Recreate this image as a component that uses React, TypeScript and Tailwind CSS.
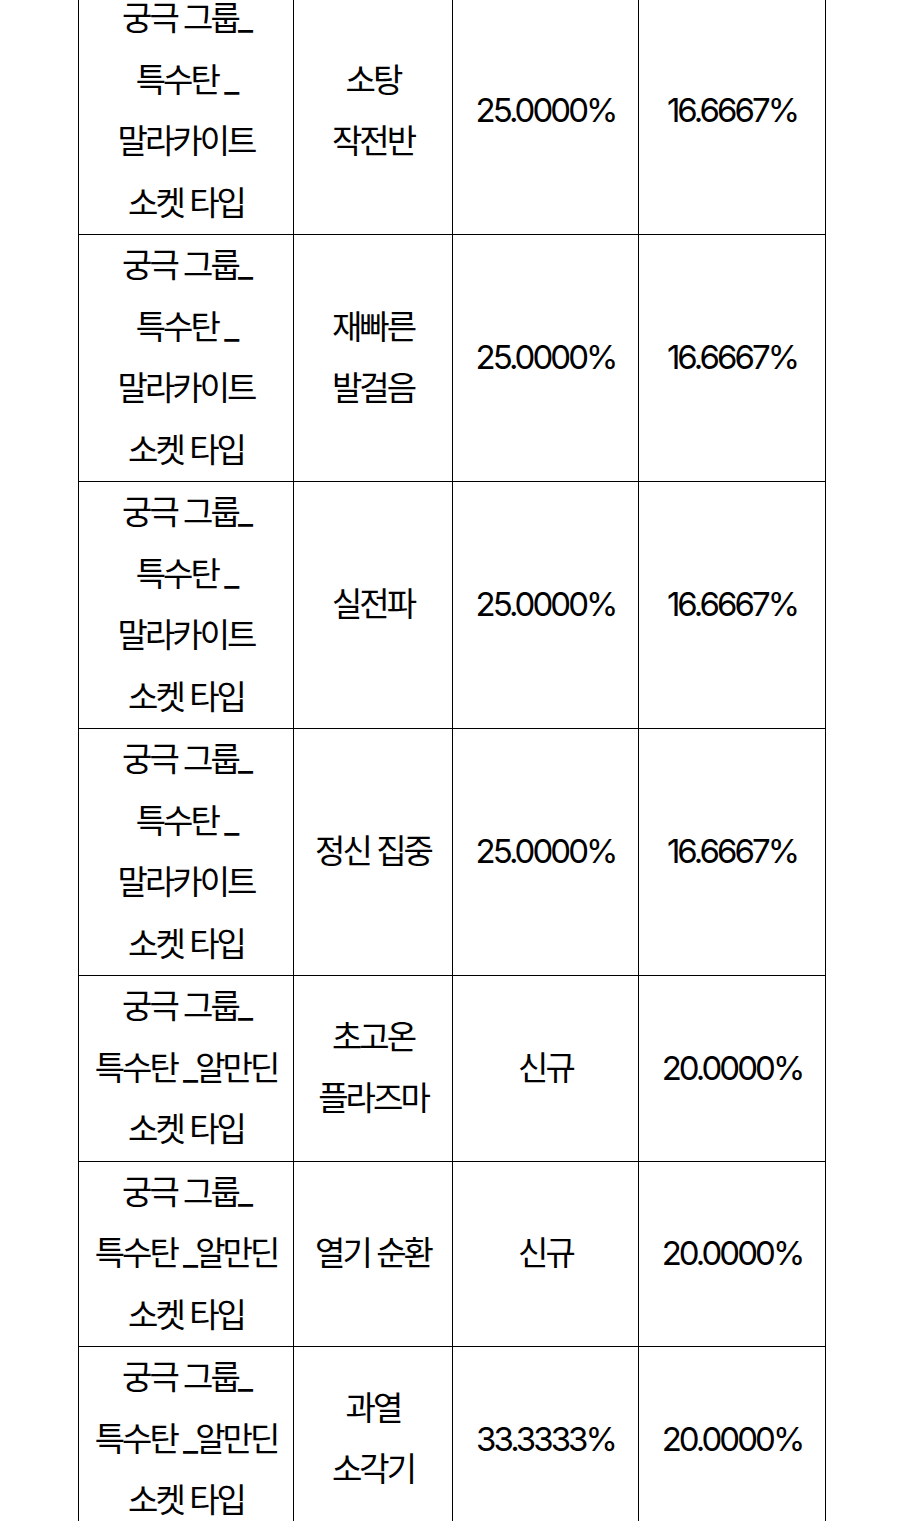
import React from "react";

type Row = { a: string[]; b: string[]; c: string; d: string };

const MAL = ["궁극 그룹_", "특수탄 _", "말라카이트", "소켓 타입"];
const ALM = ["궁극 그룹_", "특수탄 _알만딘", "소켓 타입"];

const rows: Row[] = [
  { a: MAL, b: ["소탕", "작전반"], c: "25.0000%", d: "16.6667%" },
  { a: MAL, b: ["재빠른", "발걸음"], c: "25.0000%", d: "16.6667%" },
  { a: MAL, b: ["실전파"], c: "25.0000%", d: "16.6667%" },
  { a: MAL, b: ["정신 집중"], c: "25.0000%", d: "16.6667%" },
  { a: ALM, b: ["초고온", "플라즈마"], c: "신규", d: "20.0000%" },
  { a: ALM, b: ["열기 순환"], c: "신규", d: "20.0000%" },
  { a: ALM, b: ["과열", "소각기"], c: "33.3333%", d: "20.0000%" },
];

function Lines({ l }: { l: string[] }) {
  return (
    <>
      {l.map((t, i) => (
        <div key={i} className="whitespace-nowrap">
          {t}
        </div>
      ))}
    </>
  );
}

export default function App() {
  return (
    <div className="bg-white min-h-[1521px] w-[900px] overflow-hidden">
      <div className="pl-[78px] -mt-[13px]">
        <table
          className="border-collapse text-black text-[33px] leading-[61.5px] tracking-[-0.09em]"
          style={{ fontFamily: 'Inter, "Noto Sans CJK KR", sans-serif' }}
        >
          <tbody>
            {rows.map((r, i) => (
              <tr key={i}>
                <td className="border border-black w-[215px] text-center align-middle p-0">
                  <Lines l={r.a} />
                </td>
                <td className="border border-black w-[159px] text-center align-middle p-0">
                  <Lines l={r.b} />
                </td>
                <td className="border border-black w-[186px] text-center align-middle p-0">
                  {r.c}
                </td>
                <td className="border border-black w-[187px] text-center align-middle p-0">
                  {r.d}
                </td>
              </tr>
            ))}
          </tbody>
        </table>
      </div>
    </div>
  );
}
